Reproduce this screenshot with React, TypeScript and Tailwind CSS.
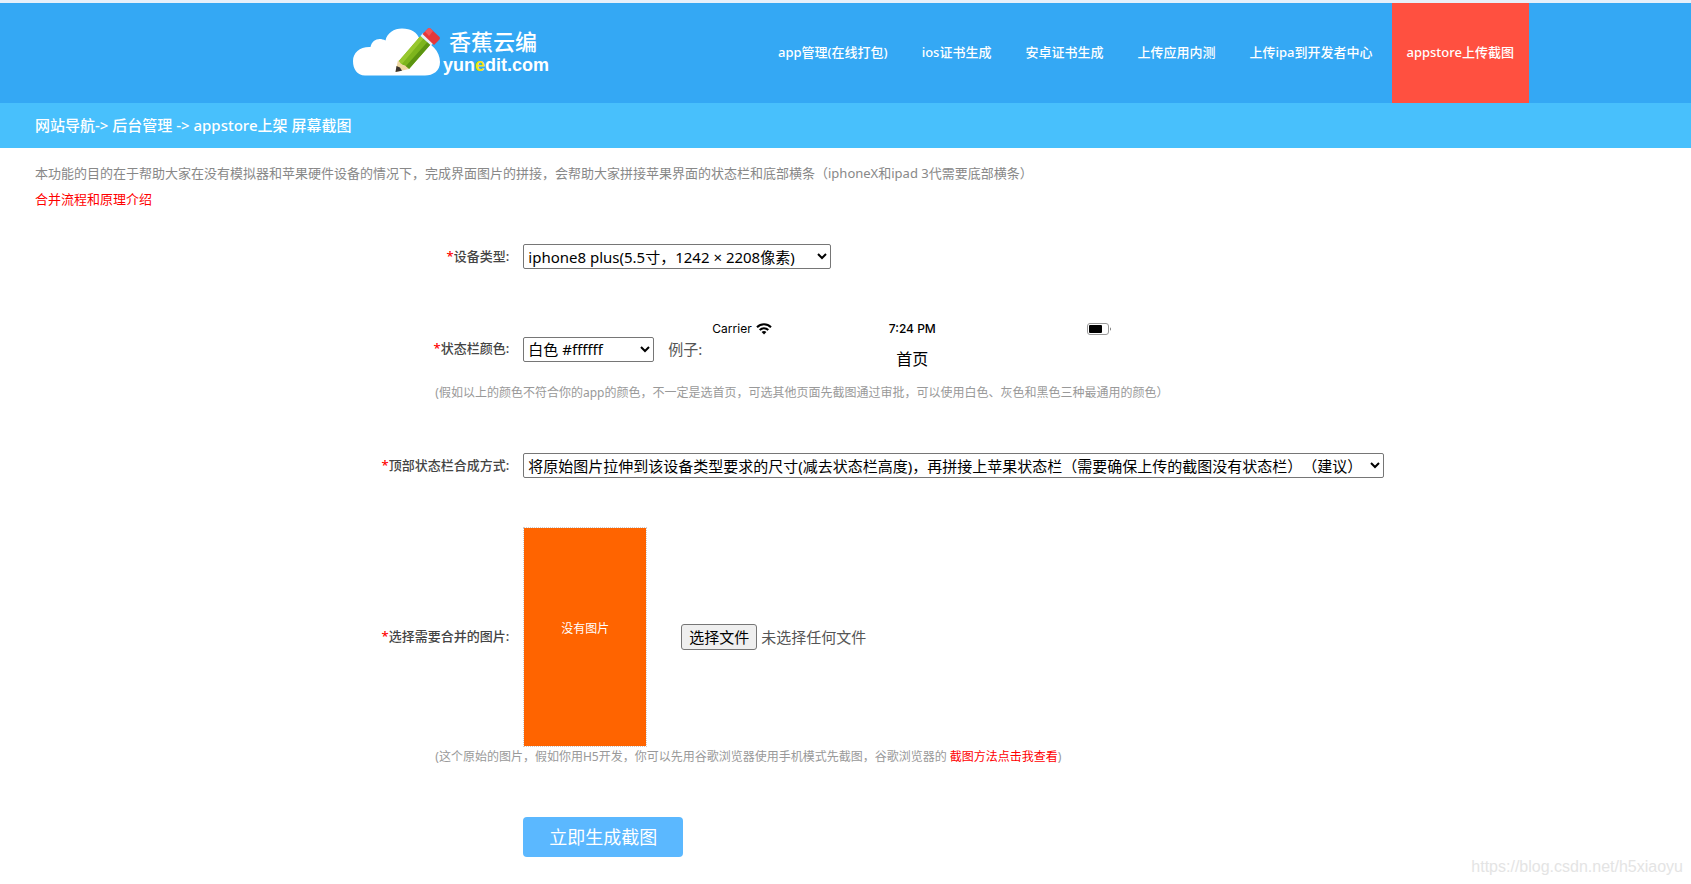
import { useRef, useState } from "react";
import type { ReactNode } from "react";

const navItems = [
  { label: "app管理(在线打包)", active: false },
  { label: "ios证书生成", active: false },
  { label: "安卓证书生成", active: false },
  { label: "上传应用内测", active: false },
  { label: "上传ipa到开发者中心", active: false },
  { label: "appstore上传截图", active: true },
];

function CloudLogo() {
  return (
    <svg width="88" height="50" viewBox="0 0 88 50" aria-hidden="true">
      <path
        d="M12 47.500C4 47.500 0 41 0 33C0 24.500 7 18.500 17.500 19C19 11.500 26 9 32.500 12.500C34 5 41 0.500 49 0.500C58 0.500 64 4 67 12C78 14 87 23 87 34C87 43 80 47.500 72 47.500Z"
        fill="#fff"
      />
      <path d="M45 34L67.500 8L77.500 16.500L56 41Z" fill="#7db51c" />
      <path d="M45 34L67.500 8L70.500 10.600L48.500 36.500Z" fill="#98c82e" />
      <path d="M52.500 38.500L74.500 14L77.500 16.500L56 41Z" fill="#5b9410" />
      <path d="M67.500 8L70 5L81 14.500L78 17.500Z" fill="#e9f3fa" />
      <path d="M69.500 6L75 0.500Q76.500 -0.500 78 1L86.500 9Q87.500 10.500 86 12L81 17Z" fill="#e5383b" />
      <path d="M72 3.500L75 0.500Q76.500 -0.500 78 1L80 3L76 8Z" fill="#f0565a" />
      <path d="M45 32L42.500 44L56 41L52 37.500L48.500 36.500Z" fill="#efd8a2" />
      <path d="M43.500 38L42.500 44L49 42.800L47 39.500Z" fill="#3b332c" />
    </svg>
  );
}

function WifiIcon() {
  return (
    <svg width="16" height="12" viewBox="0 0 16 12" aria-hidden="true">
      <g fill="none" stroke="#000" strokeWidth="2">
        <path d="M1 4.300C5 0.300 11 0.300 15 4.300" />
        <path d="M3.700 7C6.200 4.500 9.800 4.500 12.300 7" />
      </g>
      <path d="M5.600 8.900C7 7.600 9 7.600 10.400 8.900L8 11.500Z" fill="#000" />
    </svg>
  );
}

function BatteryIcon() {
  return (
    <svg width="25" height="12" viewBox="0 0 25 12" aria-hidden="true">
      <rect x="0.500" y="0.500" width="21" height="11" rx="2.500" fill="none" stroke="#999" />
      <rect x="2" y="2" width="13" height="8" rx="1" fill="#000" />
      <path d="M23 4.300C24.300 4.800 24.300 7.200 23 7.700Z" fill="#777" />
    </svg>
  );
}

function Row({ id, label, children }: { id: string; label: string; children: ReactNode }) {
  return (
    <div className="grid grid-cols-[calc(30%+2px)_1fr] items-center gap-[14px]">
      <label htmlFor={id} className="text-right text-[13px] font-medium text-[#444]">
        <span className="text-[#f00]">*</span>
        {label}:
      </label>
      <div className="flex items-center">{children}</div>
    </div>
  );
}

function Note({ children }: { children: ReactNode }) {
  return <p className="pl-[calc(30%-72px)] text-xs leading-5 text-[#999]">{children}</p>;
}

export default function App() {
  const fileRef = useRef<HTMLInputElement>(null);
  const [fileName, setFileName] = useState("未选择任何文件");

  return (
    <div className="min-h-screen border-t-3 border-[#e6f0fa] bg-white font-['Noto_Sans','Noto_Sans_CJK_SC',sans-serif] text-[#555] [text-spacing-trim:space-all]">
      <header className="flex h-[100px] justify-between bg-[#34a8f4] pr-[162px] pl-[353px]">
        <a href="#" className="flex h-full items-center text-white">
          <CloudLogo />
          <span className="flex flex-col pb-1">
            <span className="pl-2 text-[22px] leading-7 font-medium">香蕉云编</span>
            <span className="pl-0.5 font-['Liberation_Sans',sans-serif] text-lg leading-5 font-bold">
              yun<span className="text-[#f5e617]">e</span>dit.com
            </span>
          </span>
        </a>
        <nav className="flex gap-1 text-[13px] font-medium text-white">
          {navItems.map((item) => (
            <a
              key={item.label}
              href="#"
              className={
                item.active
                  ? "flex items-center bg-[#ff5040] px-[15px] whitespace-nowrap"
                  : "flex items-center px-[15px] whitespace-nowrap"
              }
            >
              {item.label}
            </a>
          ))}
        </nav>
      </header>

      <div className="flex h-[45px] items-center bg-[#48c0fc] px-[35px] text-[15px] font-medium text-white">
        网站导航-&gt; 后台管理 -&gt; appstore上架 屏幕截图
      </div>

      <main>
        <div className="px-[35px] pt-3 text-[13px] leading-[26px] text-[#888]">
          <p>
            本功能的目的在于帮助大家在没有模拟器和苹果硬件设备的情况下，完成界面图片的拼接，会帮助大家拼接苹果界面的状态栏和底部横条（iphoneX和ipad
            3代需要底部横条）
          </p>
          <a href="#" className="text-[#f00]">
            合并流程和原理介绍
          </a>
        </div>

        <form className="pt-8" onSubmit={(e) => e.preventDefault()}>
          <Row id="device" label="设备类型">
            <select
              id="device"
              className="h-[25px] w-[308px] rounded-[2px] border border-[#767676] bg-white text-[15px] text-black"
            >
              <option>iphone8 plus(5.5寸，1242 × 2208像素)</option>
            </select>
          </Row>

          <div className="pt-[46px]">
            <Row id="color" label="状态栏颜色">
              <select
                id="color"
                className="h-[25px] w-[131px] rounded-[2px] border border-[#767676] bg-white text-[15px] text-black"
              >
                <option>白色 #ffffff</option>
              </select>
              <span className="px-[14px] pr-1.5 text-[15px]">例子:</span>
              <div className="h-[68px] w-[408px] px-1 font-['Inter','Noto_Sans_CJK_SC',sans-serif] text-black">
                <div className="grid grid-cols-3 items-center pt-1 text-xs leading-5">
                  <span className="flex items-center gap-1">
                    Carrier <WifiIcon />
                  </span>
                  <span className="text-center font-medium">7:24 PM</span>
                  <span className="flex justify-end">
                    <BatteryIcon />
                  </span>
                </div>
                <div className="pt-2 text-center text-base leading-6">首页</div>
              </div>
            </Row>
            <Note>
              (假如以上的颜色不符合你的app的颜色，不一定是选首页，可选其他页面先截图通过审批，可以使用白色、灰色和黑色三种最通用的颜色）
            </Note>
          </div>

          <div className="pt-[50px]">
            <Row id="mode" label="顶部状态栏合成方式">
              <select
                id="mode"
                className="h-[25px] w-[861px] rounded-[2px] border border-[#767676] bg-white text-[15px] text-black [text-spacing-trim:space-all]"
              >
                <option>
                  将原始图片拉伸到该设备类型要求的尺寸(减去状态栏高度)，再拼接上苹果状态栏（需要确保上传的截图没有状态栏）（建议）
                </option>
              </select>
            </Row>
          </div>

          <div className="pt-[49px]">
            <Row id="picture" label="选择需要合并的图片">
              <div className="flex h-[220px] w-[124px] items-center justify-center border border-dotted border-[#ccc] bg-[#ff6400] bg-clip-padding pb-4 text-xs text-white">
                没有图片
              </div>
              <input
                ref={fileRef}
                id="picture"
                type="file"
                accept="image/*"
                className="sr-only"
                onChange={(e) => setFileName(e.target.files?.[0]?.name ?? "未选择任何文件")}
              />
              <button
                type="button"
                onClick={() => fileRef.current?.click()}
                className="ml-[34px] h-[26px] w-[76px] rounded-[3px] border border-[#767676] bg-[#efefef] text-[15px] leading-6 text-black"
              >
                选择文件
              </button>
              <span className="pl-1 text-[15px]">{fileName}</span>
            </Row>
            <Note>
              (这个原始的图片，假如你用H5开发，你可以先用谷歌浏览器使用手机模式先截图，谷歌浏览器的{" "}
              <a href="#" className="text-[#f00]">
                截图方法点击我查看
              </a>
              )
            </Note>
          </div>

          <div className="pt-[50px] pl-[calc(30%+16px)]">
            <button type="submit" className="h-10 w-40 rounded bg-[#5bb8ff] text-lg text-white">
              立即生成截图
            </button>
          </div>
        </form>
      </main>

      <footer className="pr-2 text-right font-['Liberation_Sans',sans-serif] text-base leading-5 text-[#e4e4e4]">
        https://blog.csdn.net/h5xiaoyu
      </footer>
    </div>
  );
}
